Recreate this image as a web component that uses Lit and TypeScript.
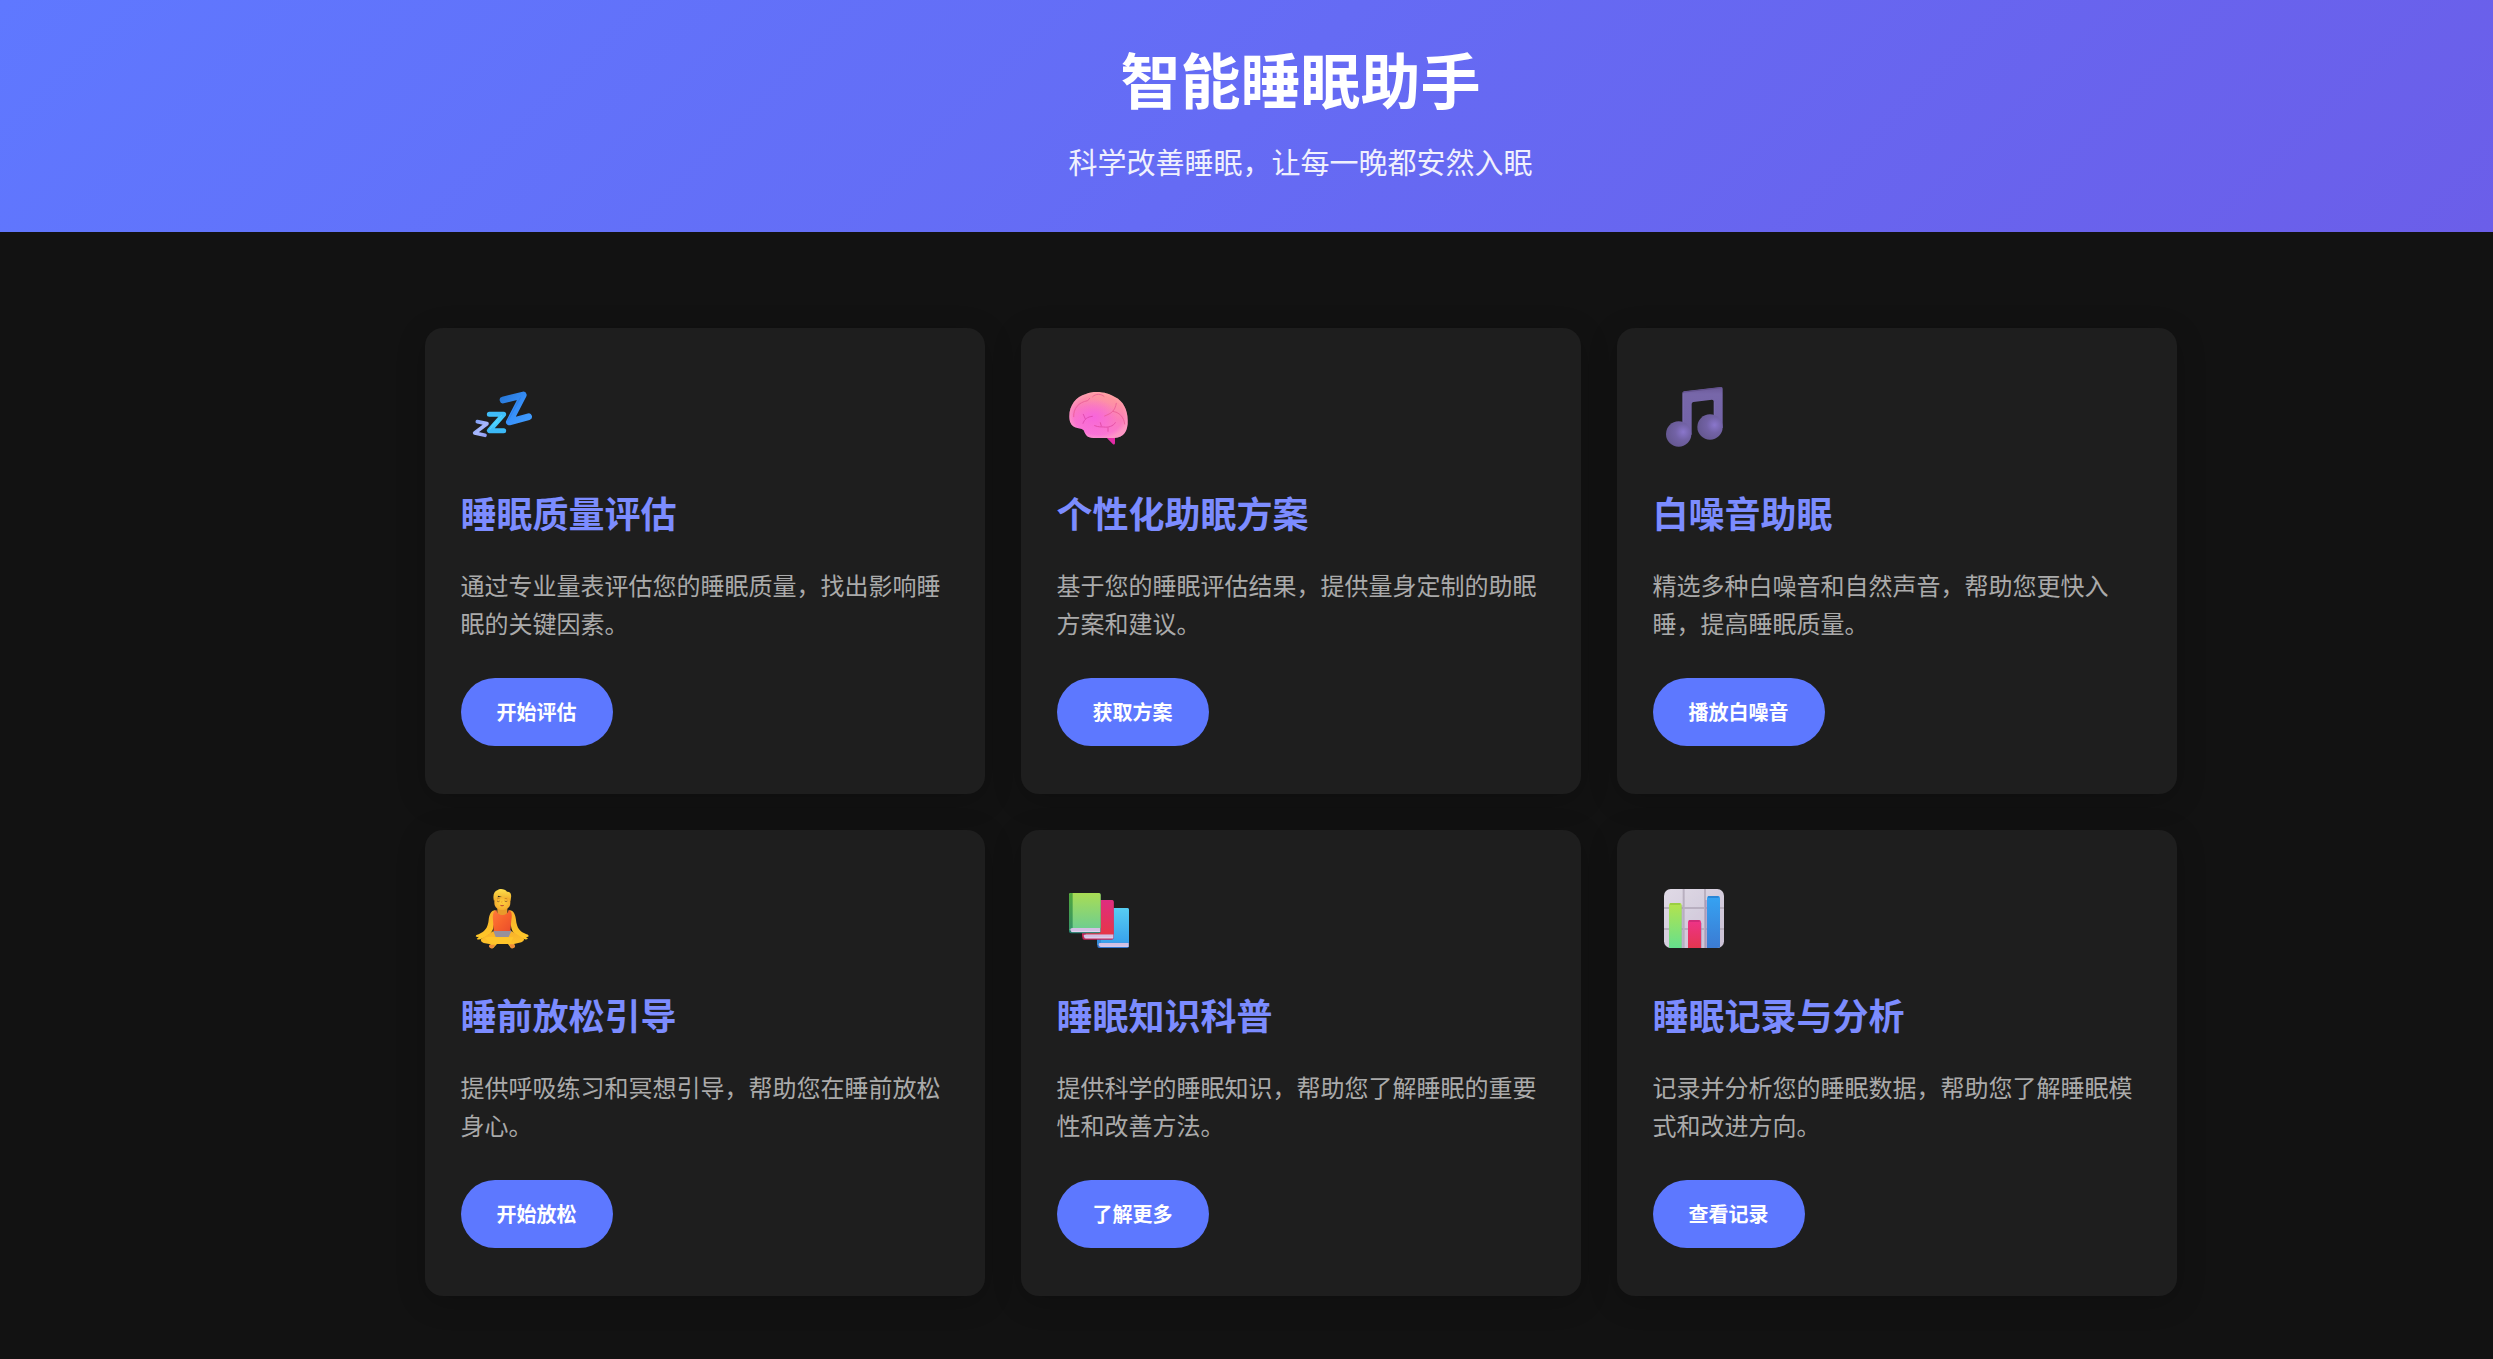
import { LitElement, html, css, svg } from "lit";
import { customElement } from "lit/decorators.js";

const zzz = html`<svg class="icon" viewBox="3 18 252 252" aria-hidden="true">
  <defs>
    <linearGradient id="za" x1="0" y1="0" x2="1" y2="1"><stop offset="0" stop-color="#7d9cf5"/><stop offset=".5" stop-color="#a9b9ff"/><stop offset="1" stop-color="#8f9cf2"/></linearGradient>
    <linearGradient id="zb" x1="0" y1="0" x2="0" y2="1"><stop offset="0" stop-color="#3fbcf8"/><stop offset=".5" stop-color="#47d2ff"/><stop offset="1" stop-color="#3bb8f6"/></linearGradient>
    <linearGradient id="zc" x1="0" y1="0" x2="1" y2="1"><stop offset="0" stop-color="#2878d8"/><stop offset=".5" stop-color="#368ef8"/><stop offset="1" stop-color="#409cff"/></linearGradient>
  </defs>
  <g fill="none" stroke-linecap="round" stroke-linejoin="round">
    <path d="M129 90 190 75 148 156 206 140" stroke="url(#zc)" stroke-width="20"/>
    <path d="M181 83 145 150" stroke="#2872dc" stroke-width="3" opacity=".5"/>
    <path d="M88 133H131L88 182H131" stroke="url(#zb)" stroke-width="15"/>
    <path d="M52 155 81 161 44 189 75 196" stroke="url(#za)" stroke-width="11"/>
    <path d="M125 136 88 180" stroke="#72e2ff" stroke-width="2" opacity=".7"/>
  </g>
</svg>`;

const brainShape = "M43 139C43 106 63 80 93 72C122 60 161 68 181 82C204 93 218 119 218 151C219 184 207 203 178 204H116C96 204 91 194 86 181C79 174 70 176 60 172C48 167 43 155 43 139Z";

const brain = html`<svg class="icon" viewBox="6 18 252 252" aria-hidden="true">
  <defs>
    <linearGradient id="ba" x1=".7" y1="0" x2=".35" y2="1"><stop offset="0" stop-color="#ff9f96"/><stop offset=".5" stop-color="#fb7cbb"/><stop offset="1" stop-color="#fb72e0"/></linearGradient>
    <radialGradient id="bb" cx=".42" cy=".55" r=".4"><stop offset="0" stop-color="#f765dc"/><stop offset="1" stop-color="#f765dc" stop-opacity="0"/></radialGradient>
    <radialGradient id="bc" cx=".5" cy=".5" r=".53"><stop offset=".8" stop-color="#ffacc0" stop-opacity="0"/><stop offset="1" stop-color="#ffacc0" stop-opacity=".6"/></radialGradient>
  </defs>
  <path d="M152 200 174 223Q180 225 180 219V198Z" fill="#e32ba6"/>
  <path d=${brainShape} fill="url(#ba)"/>
  <path d=${brainShape} fill="url(#bb)"/>
  <path d=${brainShape} fill="url(#bc)"/>
  <g fill="none" stroke="#ea5c96" stroke-width="3" stroke-linecap="round" stroke-linejoin="round" opacity=".8">
    <path d="M56 140C55 116 70 97 98 92L104 85"/>
    <path d="M113 80C122 70 139 71 147 79"/>
    <path d="M184 100C182 111 178 119 173 124C167 131 158 134 149 138M173 124C192 126 207 141 209 162"/>
    <path d="M112 139C97 140 88 148 84 160M91 147 85 133" stroke="#dc45aa"/>
    <path d="M119 167C132 172 138 170 146 171C160 173 174 169 181 158M139 168 136 158M159 173V184" stroke="#df479f"/>
  </g>
</svg>`;

const note = html`<svg class="icon" viewBox="9 18 252 252" aria-hidden="true">
  <defs>
    <radialGradient id="na" cx=".68" cy=".42" r=".7"><stop offset="0" stop-color="#8a76cc"/><stop offset=".45" stop-color="#7262a5"/><stop offset="1" stop-color="#64578f"/></radialGradient>
    <linearGradient id="nb" x1="0" y1="0" x2="0" y2="1"><stop offset="0" stop-color="#6b5a98"/><stop offset=".15" stop-color="#7767a9"/><stop offset="1" stop-color="#7363a8"/></linearGradient>
  </defs>
  <path d="M97 70Q97 65 102 64L212 51Q218 50 218 56V174H191V94Q191 89 186 89L130 96Q125 97 125 102V194H97Z" fill="url(#nb)"/>
  <path d="M99 69Q99 67 103 66L214 53" fill="none" stroke="#61508c" stroke-width="3"/>
  <path d="M100 72V160M194 96V138" stroke="#8878b9" stroke-width="2" opacity=".5"/>
  <circle cx="86" cy="192" r="38" fill="url(#na)"/>
  <circle cx="180" cy="171" r="38" fill="url(#na)"/>
</svg>`;

const lotus = html`<svg class="icon" viewBox="3 24 252 252" aria-hidden="true">
  <defs>
    <radialGradient id="pa" cx=".5" cy=".45" r=".6"><stop offset="0" stop-color="#ffd23c"/><stop offset="1" stop-color="#f3a72d"/></radialGradient>
    <linearGradient id="pb" x1="0" y1="0" x2="1" y2="1"><stop offset="0" stop-color="#ff7a3c"/><stop offset=".5" stop-color="#f7632c"/><stop offset="1" stop-color="#ea4c2c"/></linearGradient>
    <linearGradient id="pc" x1="0" y1="0" x2="0" y2="1"><stop offset="0" stop-color="#f8b02c"/><stop offset="1" stop-color="#ffc928"/></linearGradient>
    <linearGradient id="pd" x1="0" y1="0" x2="0" y2="1"><stop offset="0" stop-color="#ffe04d"/><stop offset="1" stop-color="#eca927"/></linearGradient>
  </defs>
  <path d="M112 105H142V126Q142 138 127 138Q112 138 112 126Z" fill="#e99b2b"/>
  <path d="M106 120C92 122 88 134 86 150C84 168 79 179 67 187L56 193Q47 194 47 199Q50 202 57 200L50 207Q57 211 67 205C86 198 99 187 101 168L106 146ZM148 120C162 122 166 134 168 150C170 168 175 179 187 187L198 192Q207 194 206 199Q203 202 197 200L204 206Q197 211 187 205C168 198 155 187 153 168L148 146Z" fill="url(#pc)"/>
  <path d="M102 180H152L160 207H94Z" fill="#98909c"/>
  <path d="M100 183 64 206Q59 214 71 219L92 223 87 229Q92 237 100 234L111 222H144L153 234Q162 237 165 229L162 222 184 217Q198 209 188 203L154 183 146 201H107Z" fill="url(#pc)"/>
  <path d="M88 224H106L98 235Q91 237 87 230ZM148 223H163L165 230Q161 237 153 234Z" fill="#ef8c38"/>
  <path d="M74 203Q91 198 113 202H160L151 222H108Q91 222 74 203Z" fill="#ffc52a"/>
  <path d="M109 119C112 140 143 140 146 119L153 125Q157 133 154 150L151 183H101L99 150Q97 133 102 125Z" fill="url(#pb)"/>
  <path d="M103 82V98C103 127 151 128 151 98V80Z" fill="url(#pa)"/>
  <path d="M102 93C97 76 103 63 112 61C119 54 136 57 141 65C151 64 155 72 153 83L151 94Q149 84 142 82C126 83 120 79 115 77Q111 87 104 90Z" fill="url(#pd)"/>
  <path d="M111 87Q115 84 119 86M134 86Q138 84 142 87" fill="none" stroke="#b87524" stroke-width="2"/>
  <path d="M111 93Q115 97 119 93M134 93Q138 97 142 93" fill="none" stroke="#74452f" stroke-width="2"/>
  <path d="M126 93Q123 99 128 100" fill="none" stroke="#ed962c" stroke-width="2"/>
  <path d="M120 104Q126 107 133 104Q131 109 126 109Q122 109 120 104Z" fill="#b32f36"/>
</svg>`;

const book = (x: number, y: number, w: number, h: number, cover: string, edge: string, spine: string) => svg`
  <rect x=${x} y=${y} width=${w} height=${h} rx="6" fill=${edge}/>
  <path d=${`M${x + 4} ${y + h - 16}H${x + w - 1}V${y + h - 4}H${x + 7}Q${x + 2} ${y + h - 10} ${x + 4} ${y + h - 16}Z`} fill="#d3c0e4"/>
  <path d=${`M${x + 9} ${y + h - 5}H${x + w - 2}`} stroke="#f2e2f6" stroke-width="2"/>
  <path d=${`M${x} ${y + 6}Q${x} ${y} ${x + 6} ${y}H${x + w - 5}Q${x + w} ${y} ${x + w} ${y + 5}V${y + h - 16}H${x + 6}L${x} ${y + h - 8}Z`} fill=${cover}/>
  <path d=${`M${x} ${y + 6}Q${x} ${y} ${x + 6} ${y}H${x + 11}V${y + h - 16}Q${x + 2} ${y + h - 16} ${x} ${y + h - 8}Z`} fill=${spine}/>`;

const books = html`<svg class="icon" viewBox="6 24 252 252" aria-hidden="true">
  <defs>
    <linearGradient id="ka" x1="0" y1="0" x2="0" y2="1"><stop offset="0" stop-color="#a9dc54"/><stop offset="1" stop-color="#6bcd93"/></linearGradient>
    <linearGradient id="kb" x1="0" y1="0" x2="0" y2="1"><stop offset="0" stop-color="#df2c80"/><stop offset="1" stop-color="#e73743"/></linearGradient>
    <linearGradient id="kc" x1="0" y1="0" x2="0" y2="1"><stop offset="0" stop-color="#57cdf2"/><stop offset="1" stop-color="#369fec"/></linearGradient>
    <linearGradient id="kd" x1="0" y1="0" x2="0" y2="1"><stop offset="0" stop-color="#51a83b"/><stop offset="1" stop-color="#369469"/></linearGradient>
  </defs>
  ${book(127, 114, 95, 120, "url(#kc)", "#3275cf", "#338ad7")}
  ${book(82, 90, 94, 119, "url(#kb)", "#c12658", "#bd2460")}
  ${book(42, 69, 95, 121, "url(#ka)", "#237c6b", "url(#kd)")}
</svg>`;

const chart = html`<svg class="icon" viewBox="9 24 252 252" aria-hidden="true">
  <defs>
    <clipPath id="cl"><rect x="42" y="57" width="180" height="177" rx="20"/></clipPath>
    <linearGradient id="ca" x1="0" y1="0" x2="0" y2="1"><stop offset="0" stop-color="#b5e34d"/><stop offset="1" stop-color="#65e08d"/></linearGradient>
    <linearGradient id="cb" x1="0" y1="0" x2="0" y2="1"><stop offset="0" stop-color="#ee3389"/><stop offset="1" stop-color="#e4364f"/></linearGradient>
    <linearGradient id="cc" x1="0" y1="0" x2="0" y2="1"><stop offset="0" stop-color="#35a3f3"/><stop offset="1" stop-color="#3c7bd2"/></linearGradient>
    <linearGradient id="cd" x1="0" y1="0" x2="1" y2="1"><stop offset="0" stop-color="#e0dae6"/><stop offset="1" stop-color="#c9c0d4"/></linearGradient>
  </defs>
  <g clip-path="url(#cl)">
    <rect x="42" y="57" width="180" height="177" fill="url(#cd)"/>
    <path d="M101 57V234M165 57V234M42 114H222M42 177H222" stroke="#b9b0c0" stroke-width="6"/>
    <path d="M95 106V234M153 158V234M168 90V234" stroke="#9a83b5" stroke-width="5" opacity=".55"/>
    <path d="M57 234V105Q57 99 63 99H89Q95 99 95 105V234Z" fill="url(#ca)"/>
    <path d="M114 234V156Q114 150 120 150H147Q153 150 153 156V234Z" fill="url(#cb)"/>
    <path d="M171 234V84Q171 78 177 78H204Q210 78 210 84V234Z" fill="url(#cc)"/>
    <path d="M60 102H91" stroke="#92c93f" stroke-width="4"/>
    <path d="M117 153H149" stroke="#c92a73" stroke-width="4"/>
    <path d="M174 81H206" stroke="#267dcc" stroke-width="4"/>
  </g>
</svg>`;

const features = [
  { icon: zzz, title: "睡眠质量评估", text: "通过专业量表评估您的睡眠质量，找出影响睡眠的关键因素。", action: "开始评估" },
  { icon: brain, title: "个性化助眠方案", text: "基于您的睡眠评估结果，提供量身定制的助眠方案和建议。", action: "获取方案" },
  { icon: note, title: "白噪音助眠", text: "精选多种白噪音和自然声音，帮助您更快入睡，提高睡眠质量。", action: "播放白噪音" },
  { icon: lotus, title: "睡前放松引导", text: "提供呼吸练习和冥想引导，帮助您在睡前放松身心。", action: "开始放松" },
  { icon: books, title: "睡眠知识科普", text: "提供科学的睡眠知识，帮助您了解睡眠的重要性和改善方法。", action: "了解更多" },
  { icon: chart, title: "睡眠记录与分析", text: "记录并分析您的睡眠数据，帮助您了解睡眠模式和改进方向。", action: "查看记录" },
];

@customElement("app-root")
export class AppRoot extends LitElement {
  static styles = css`
    :host {
      display: block;
      box-sizing: border-box;
      min-height: 100vh;
      background: #121212;
      color: #fff;
      font-family: "Noto Sans CJK SC", sans-serif;
    }
    * { box-sizing: border-box; }
    h1, h2, p { margin: 0; }
    .header {
      padding: 36px 0 48px 108px;
      background: linear-gradient(135deg, #5f78ff, #6b5ee9);
      text-align: center;
    }
    .brand { font-size: 60px; line-height: 84px; font-weight: 700; }
    .tagline { margin-top: 18px; font-size: 29px; line-height: 46px; opacity: 0.9; }
    .main { padding: 96px 24px 60px 132px; }
    .grid {
      display: grid;
      grid-template-columns: repeat(auto-fit, minmax(450px, 1fr));
      gap: 36px;
      max-width: 1752px;
      margin: 0 auto;
    }
    .card {
      display: flex;
      flex-direction: column;
      align-items: flex-start;
      padding: 48px 36px;
      border-radius: 18px;
      background: #1e1e1e;
      box-shadow: 0 6px 30px rgba(0, 0, 0, 0.2);
    }
    .icon { display: block; width: 84px; height: 84px; }
    .title { margin-top: 28px; font-size: 36px; line-height: 48px; font-weight: 700; color: #7c8cff; }
    .text { margin: 30px 0 36px; font-size: 24px; line-height: 38px; color: #aaa; }
    .action {
      padding: 0 36px;
      border: 0;
      border-radius: 36px;
      background: #5d78ff;
      color: #fff;
      font-family: inherit;
      font-size: 20px;
      line-height: 68px;
      font-weight: 700;
      cursor: pointer;
    }
    .action:hover { background: #4a66f0; }
  `;

  render() {
    return html`
      <header class="header">
        <h1 class="brand">智能睡眠助手</h1>
        <p class="tagline">科学改善睡眠，让每一晚都安然入眠</p>
      </header>
      <main class="main">
        <div class="grid">
          ${features.map((f) => html`
            <section class="card">
              ${f.icon}
              <h2 class="title">${f.title}</h2>
              <p class="text">${f.text}</p>
              <button class="action" type="button">${f.action}</button>
            </section>`)}
        </div>
      </main>
    `;
  }
}
